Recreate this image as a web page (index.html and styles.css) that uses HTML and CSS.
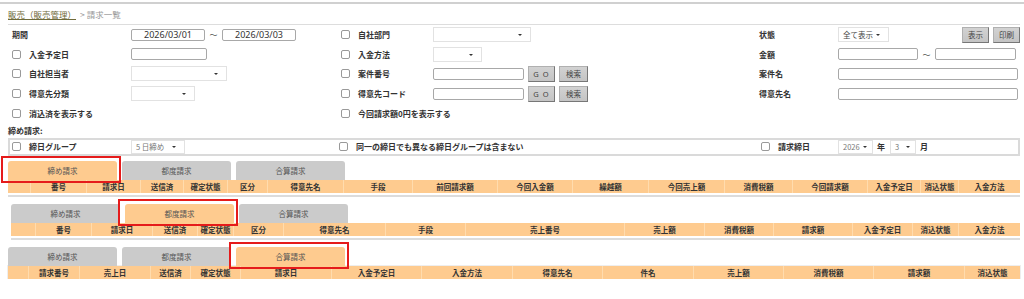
FILE: index.html
```html
<!DOCTYPE html>
<html lang="ja">

<head>
  <meta charset="UTF-8">
  <title>請求一覧</title>
  <link rel="stylesheet" href="styles.css">
</head>

<body>
  <div class="topbar"></div>
  <div class="crumb"><a href="#">販売（販売管理）</a><span class="here">&gt; 請求一覧</span></div>

  <div class="filters">
    <!-- row 1 -->
    <div class="lbl">期間</div>
    <div class="ctl">
      <span class="inp date">2026/03/01</span><span class="tilde">～</span><span class="inp date w77">2026/03/03</span>
    </div>
    <div class="lbl"><span class="cb"></span>自社部門</div>
    <div class="ctl"><span class="sel w98"><i></i></span></div>
    <div class="lbl plain">状態</div>
    <div class="ctl">
      <span class="sel w51">全て表示<i></i></span>
      <span class="btns"><span class="btn">表示</span><span class="btn">印刷</span></span>
    </div>

    <!-- row 2 -->
    <div class="lbl"><span class="cb"></span>入金予定日</div>
    <div class="ctl"><span class="inp w76"></span></div>
    <div class="lbl"><span class="cb"></span>入金方法</div>
    <div class="ctl"><span class="sel w49"><i></i></span></div>
    <div class="lbl plain">金額</div>
    <div class="ctl"><span class="inp w80"></span><span class="tilde">～</span><span class="inp w81"></span></div>

    <!-- row 3 -->
    <div class="lbl"><span class="cb"></span>自社担当者</div>
    <div class="ctl"><span class="sel w96"><i></i></span></div>
    <div class="lbl"><span class="cb"></span>案件番号</div>
    <div class="ctl"><span class="inp w91"></span><span class="btn go">G O</span><span class="btn">検索</span></div>
    <div class="lbl plain">案件名</div>
    <div class="ctl"><span class="inp w180"></span></div>

    <!-- row 4 -->
    <div class="lbl"><span class="cb"></span>得意先分類</div>
    <div class="ctl"><span class="sel w64"><i></i></span></div>
    <div class="lbl"><span class="cb"></span>得意先コード</div>
    <div class="ctl"><span class="inp w91"></span><span class="btn go">G O</span><span class="btn">検索</span></div>
    <div class="lbl plain">得意先名</div>
    <div class="ctl"><span class="inp w180"></span></div>

    <!-- row 5 -->
    <div class="lbl wide"><span class="cb"></span>消込済を表示する</div>
    <div class="lbl wide"><span class="cb"></span>今回請求額0円を表示する</div>
  </div>

  <div class="group-title">締め請求:</div>
  <div class="closing">
    <div class="lbl"><span class="cb"></span>締日グループ</div>
    <div class="ctl"><span class="sel w54 light">5 日締め<i></i></span></div>
    <div class="lbl wide"><span class="cb"></span>同一の締日でも異なる締日グループは含まない</div>
    <div class="lbl"><span class="cb"></span>請求締日</div>
    <div class="ctl">
      <span class="sel w35 light">2026<i></i></span><span class="unit">年</span><span class="sel w26 light">3<i></i></span><span class="unit">月</span>
    </div>
  </div>

  <div class="sheet">
    <div class="tabs">
      <div class="tab on marked">締め請求</div>
      <div class="tab">都度請求</div>
      <div class="tab">合算請求</div>
    </div>
    <div class="head cols-closing">
      <div></div><div>番号</div><div>請求日</div><div>送信済</div><div>確定状態</div><div>区分</div><div>得意先名</div><div>手段</div><div>前回請求額</div><div>今回入金額</div><div>繰越額</div><div>今回売上額</div><div>消費税額</div><div>今回請求額</div><div>入金予定日</div><div>消込状態</div><div>入金方法</div>
    </div>
    <div class="foot"></div>
  </div>

  <div class="sheet shift">
    <div class="tabs">
      <div class="tab">締め請求</div>
      <div class="tab on marked">都度請求</div>
      <div class="tab">合算請求</div>
    </div>
    <div class="head cols-each">
      <div></div><div>番号</div><div>請求日</div><div>送信済</div><div>確定状態</div><div>区分</div><div>得意先名</div><div>手段</div><div>売上番号</div><div>売上額</div><div>消費税額</div><div>請求額</div><div>入金予定日</div><div>消込状態</div><div>入金方法</div>
    </div>
    <div class="foot"></div>
  </div>

  <div class="sheet last">
    <div class="tabs">
      <div class="tab">締め請求</div>
      <div class="tab">都度請求</div>
      <div class="tab on marked">合算請求</div>
    </div>
    <div class="head cols-sum">
      <div></div><div>請求番号</div><div>売上日</div><div>送信済</div><div>確定状態</div><div>請求日</div><div>入金予定日</div><div>入金方法</div><div>得意先名</div><div>件名</div><div>売上額</div><div>消費税額</div><div>請求額</div><div>消込状態</div>
    </div>
  </div>
</body>

</html>
```

FILE: styles.css
```css
body {
  margin: 0;
  padding: 0 4px 0 8px;
  background: #fff;
  color: #333;
  font-family: "Noto Sans CJK JP", "Noto Sans", sans-serif;
  font-size: 8px;
}

.topbar {
  height: 2px;
  margin: 2px -4px 0 -8px;
  background: #d0d0d0;
}

.crumb {
  height: 20px;
  line-height: 21px;
  border-bottom: 1px solid #ddd;
  font-size: 8.5px;
}

.crumb a {
  color: #6f6b3a;
  text-decoration: underline;
}

.crumb .here {
  color: #999;
  margin-left: 4px;
}

/* search form */
.filters,
.closing {
  display: grid;
  grid-template-columns: 123px 206px 96px 326px 79px 1fr;
  align-items: center;
}

.filters {
  grid-auto-rows: 19.6px;
}

.lbl {
  display: flex;
  align-items: center;
  padding-left: 4px;
  font-weight: bold;
  white-space: nowrap;
}

.lbl.plain {
  padding-left: 0;
}

.lbl.wide {
  grid-column: span 2;
}

.cb {
  width: 7px;
  height: 7px;
  border: 1px solid #999;
  border-radius: 2px;
  margin-right: 8px;
  background: #fff;
}

.ctl {
  display: flex;
  align-items: center;
}

.inp {
  box-sizing: border-box;
  display: inline-block;
  height: 12px;
  border: 1px solid #a8a8a8;
  border-radius: 2px;
  background: #fff;
}

.inp.date {
  width: 74px;
  text-align: center;
  font-family: "Noto Sans", sans-serif;
  font-size: 9px;
  line-height: 10px;
}

.w76 { width: 76px; }
.w77 { width: 77px; }
.w80 { width: 80px; }
.w81 { width: 81px; }
.w91 { width: 91px; }
.w180 { width: 180px; }

.tilde {
  width: 17px;
  text-align: center;
  color: #555;
}

.sel {
  box-sizing: border-box;
  position: relative;
  display: inline-flex;
  align-items: center;
  height: 15px;
  padding-left: 4px;
  border: 1px solid #e2e2e2;
  background: #fff;
  font-size: 7.5px;
  color: #444;
}

.sel i {
  position: absolute;
  right: 8px;
  top: 6px;
  border-left: 2px solid transparent;
  border-right: 2px solid transparent;
  border-top: 2px solid #333;
}

.sel.light {
  color: #777;
}

.w26 { width: 26px; }
.w35 { width: 35px; }
.w49 { width: 49px; }
.w51 { width: 51px; }
.w54 { width: 54px; }
.w64 { width: 64px; }
.w96 { width: 96px; }
.w98 { width: 98px; }

.w26 i,
.w35 i {
  right: 5px;
}

.btns {
  display: flex;
  gap: 4px;
  margin-left: auto;
}

.btn {
  box-sizing: border-box;
  display: inline-flex;
  align-items: center;
  justify-content: center;
  width: 27px;
  height: 16px;
  background: linear-gradient(#d2d2d2, #c4c4c4);
  border: 1px solid #b0b0b0;
  border-right-color: #777;
  border-bottom-color: #777;
  font-size: 7.5px;
  color: #444;
}

.ctl .btn {
  margin-left: 4px;
  width: 29px;
}

.ctl .btn.go {
  width: 27px;
  letter-spacing: 1px;
  font-family: "Noto Sans", sans-serif;
}

.btns .btn {
  margin-left: 0;
  width: 27px;
}

.group-title {
  height: 15px;
  line-height: 16px;
  font-weight: bold;
}

.closing {
  box-sizing: border-box;
  height: 18px;
  border: 2px solid #dadada;
  grid-template-columns: 121px 206px 96px 326px 79px 1fr;
}

.closing .lbl {
  padding-left: 2px;
}

.closing .sel {
  height: 14px;
}

.closing .ctl .sel i {
  top: 5px;
}

.unit {
  font-weight: bold;
  margin: 0 5px 0 4px;
}

/* result tables */
.sheet {
  margin-top: 5px;
}

.sheet.shift {
  margin-top: 7px;
  padding-left: 3px;
}

.sheet.last {
  margin-top: 7px;
}

.tabs {
  display: flex;
  gap: 5px;
}

.tab {
  position: relative;
  width: 109px;
  height: 19px;
  line-height: 19px;
  text-align: center;
  background: #cbcbcb;
  border-radius: 3px 3px 0 0;
  font-size: 7.5px;
  color: #555;
}

.tab.on {
  background: #fecb8f;
}

.tab.marked::after {
  content: "";
  position: absolute;
  left: -7px;
  right: -4px;
  top: -5px;
  bottom: -3px;
  border: 2px solid #e51b1b;
}

.head {
  display: grid;
  height: 13px;
  background: #fecb8f;
  font-weight: bold;
  font-size: 7.5px;
  line-height: 13px;
  color: #333;
}

.head div {
  text-align: center;
  border-left: 1px solid #ffdcae;
  white-space: nowrap;
}

.head div:first-child {
  border-left: none;
}

.cols-closing {
  grid-template-columns: 22px 56px 54px 43px 44px 40px 76px 69px 85px 75px 76px 76px 68px 75px 53px 38px 62px;
}

.cols-each {
  grid-template-columns: 24px 56px 61px 45px 36px 50px 102px 80px 159px 80px 69px 79px 60px 46px 62px;
}

.cols-sum {
  grid-template-columns: 20px 51px 71px 40px 50px 91px 90px 91px 90px 91px 90px 90px 91px 56px;
}

.foot {
  height: 2px;
  margin-top: 2px;
  background: #dcdcdc;
}

.last .head {
  outline: 1px solid #eee;
}
```
